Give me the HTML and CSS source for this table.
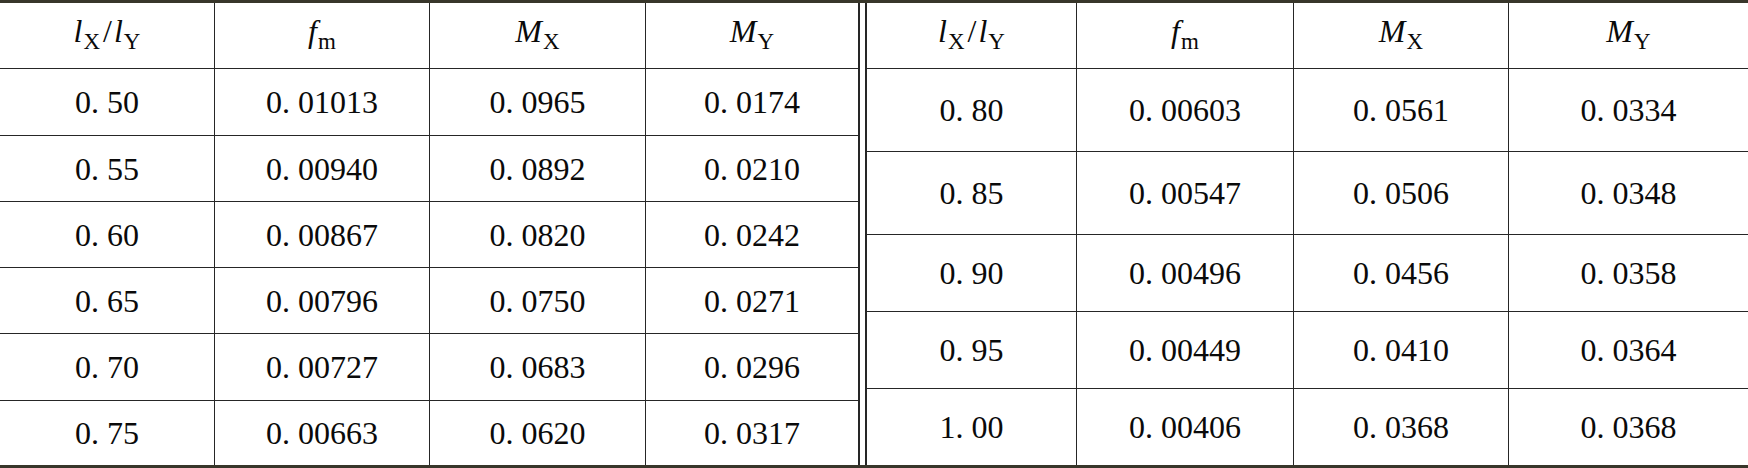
FILE: index.html
```html
<!DOCTYPE html>
<html lang="zh">
<head>
<meta charset="utf-8">
<title>Table</title>
<link rel="stylesheet" href="styles.css">
</head>
<body>
<div class="sheet">
  <div class="half left">
    <div class="cell head"><span class="lbl"><span class="it">l</span><sub>X</sub><span class="sl">/</span><span class="it">l</span><sub>Y</sub></span></div>
    <div class="cell head"><span class="lbl"><span class="it">f</span><sub>m</sub></span></div>
    <div class="cell head"><span class="lbl"><span class="it">M</span><sub>X</sub></span></div>
    <div class="cell head last-col"><span class="lbl"><span class="it">M</span><sub>Y</sub></span></div>

    <div class="cell">0. 50</div><div class="cell">0. 01013</div><div class="cell">0. 0965</div><div class="cell last-col">0. 0174</div>
    <div class="cell">0. 55</div><div class="cell">0. 00940</div><div class="cell">0. 0892</div><div class="cell last-col">0. 0210</div>
    <div class="cell">0. 60</div><div class="cell">0. 00867</div><div class="cell">0. 0820</div><div class="cell last-col">0. 0242</div>
    <div class="cell">0. 65</div><div class="cell">0. 00796</div><div class="cell">0. 0750</div><div class="cell last-col">0. 0271</div>
    <div class="cell">0. 70</div><div class="cell">0. 00727</div><div class="cell">0. 0683</div><div class="cell last-col">0. 0296</div>
    <div class="cell last-row">0. 75</div><div class="cell last-row">0. 00663</div><div class="cell last-row">0. 0620</div><div class="cell last-row last-col">0. 0317</div>
  </div>
  <div class="half right">
    <div class="cell head first-col"><span class="lbl"><span class="it">l</span><sub>X</sub><span class="sl">/</span><span class="it">l</span><sub>Y</sub></span></div>
    <div class="cell head"><span class="lbl"><span class="it">f</span><sub>m</sub></span></div>
    <div class="cell head"><span class="lbl"><span class="it">M</span><sub>X</sub></span></div>
    <div class="cell head end"><span class="lbl"><span class="it">M</span><sub>Y</sub></span></div>

    <div class="cell first-col">0. 80</div><div class="cell">0. 00603</div><div class="cell">0. 0561</div><div class="cell end">0. 0334</div>
    <div class="cell first-col">0. 85</div><div class="cell">0. 00547</div><div class="cell">0. 0506</div><div class="cell end">0. 0348</div>
    <div class="cell first-col">0. 90</div><div class="cell">0. 00496</div><div class="cell">0. 0456</div><div class="cell end">0. 0358</div>
    <div class="cell first-col">0. 95</div><div class="cell">0. 00449</div><div class="cell">0. 0410</div><div class="cell end">0. 0364</div>
    <div class="cell first-col last-row">1. 00</div><div class="cell last-row">0. 00406</div><div class="cell last-row">0. 0368</div><div class="cell end last-row">0. 0368</div>
  </div>
</div>
</body>
</html>
```
FILE: styles.css
```css
html, body {
  margin: 0;
  padding: 0;
  background: #ffffff;
}

body {
  font-family: "Liberation Serif", "Times New Roman", serif;
  color: #0a0a0a;
}

.sheet {
  width: 1748px;
  height: 468px;
  box-sizing: border-box;
  border-top: 3px solid #38362a;
  border-bottom: 3px solid #38362a;
  display: flex;
  gap: 5px;
}

.half {
  display: grid;
}

.left {
  width: 860px;
  grid-template-columns: 215px 215px 216px 214px;
  grid-template-rows: 66px 67px 66px 66px 66px 67px 64px;
}

.right {
  width: 883px;
  grid-template-columns: 212px 217px 215px 239px;
  grid-template-rows: 66px 83px 83px 77px 77px 76px;
}

.cell {
  box-sizing: border-box;
  display: flex;
  align-items: center;
  justify-content: center;
  font-size: 32px;
  line-height: 1;
  border-right: 1px solid #262626;
  border-bottom: 1px solid #262626;
  white-space: pre;
}

.cell.last-col {
  border-right: 2px solid #262626;
}

.cell.first-col {
  border-left: 2px solid #262626;
}

.cell.end {
  border-right: none;
}

.cell.last-row {
  border-bottom: none;
}

.lbl {
  display: block;
  line-height: 1;
  padding-bottom: 4px;
}

.it {
  font-style: italic;
}

.sl {
  margin: 0 2px 0 3px;
}

.lbl sub {
  font-size: 23px;
  vertical-align: -7px;
  line-height: 1;
  margin-left: 1px;
}
```
